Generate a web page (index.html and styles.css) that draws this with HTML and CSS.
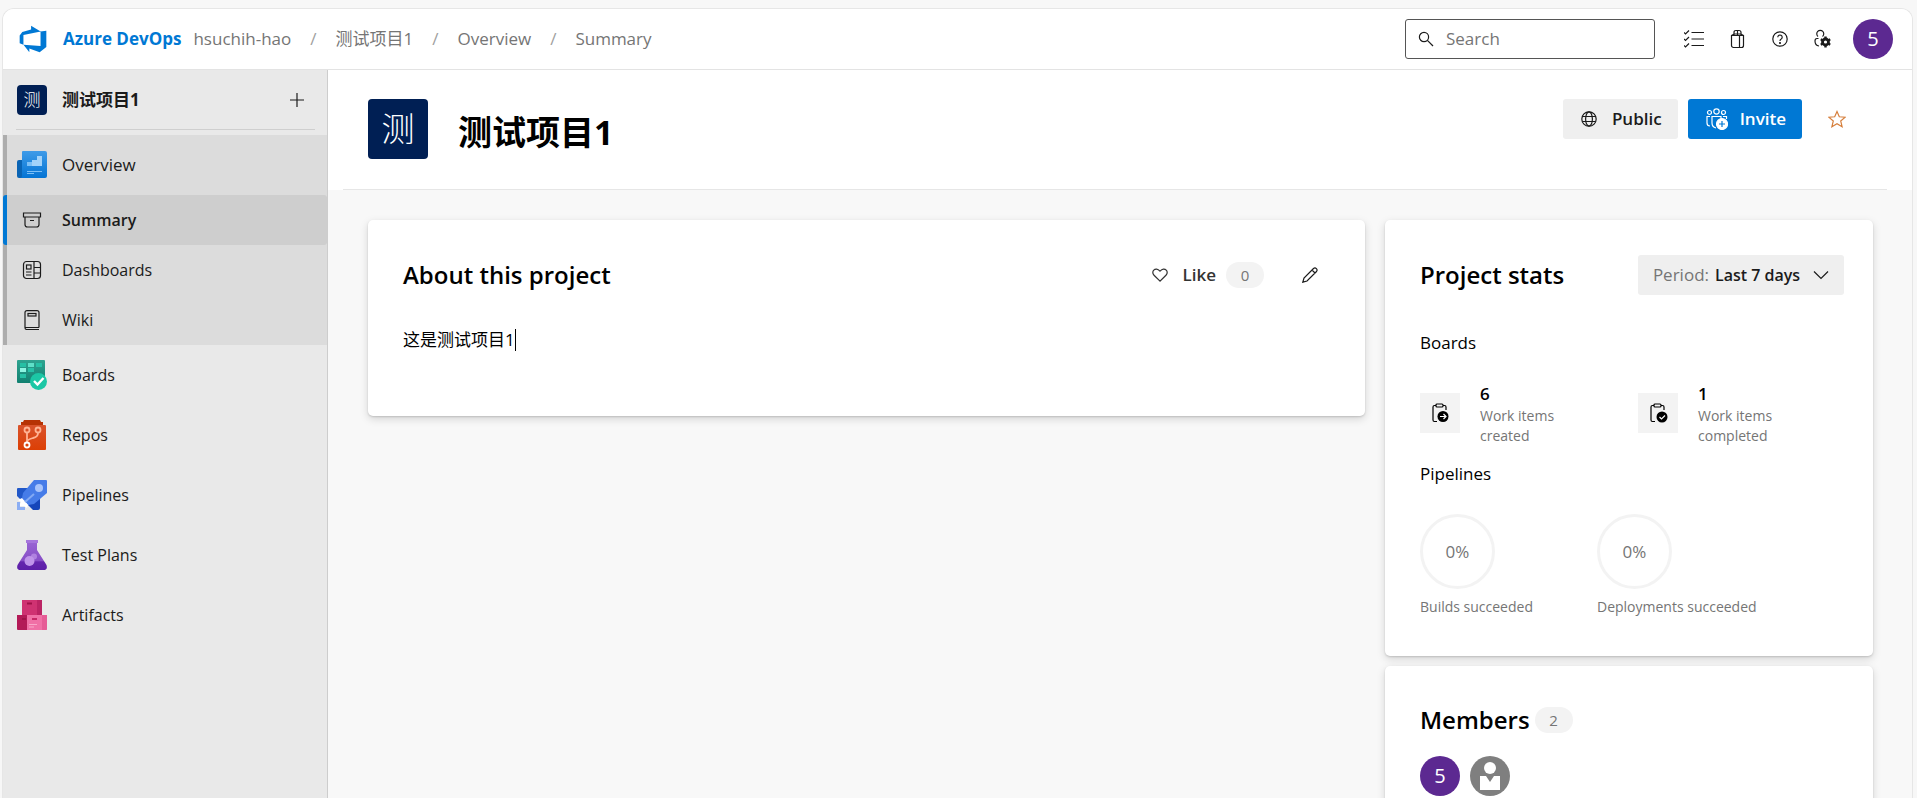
FILE: index.html
```html
<!DOCTYPE html>
<html lang="en">
<head>
<meta charset="utf-8">
<title>测试项目1 - Overview</title>
<link rel="stylesheet" href="styles.css">
</head>
<body>
<div class="app">
  <header class="topbar">
    <a class="brand" href="#">
      <svg class="brand-logo" viewBox="0 0 18 18" aria-hidden="true"><path fill="#0078d4" d="M17 4v9.74l-4 3.28-6.2-2.26V17l-3.51-4.59 10.23.8V4.44zm-3.41.49L7.85 1v2.29L2.58 4.84 1 6.87v4.61l2.26 1V6.57z"/></svg>
      <span>Azure DevOps</span>
    </a>
    <nav class="crumbs" aria-label="Breadcrumb">
      <a href="#">hsuchih-hao</a><span class="sep">/</span>
      <a href="#">测试项目1</a><span class="sep">/</span>
      <a href="#">Overview</a><span class="sep">/</span>
      <a href="#">Summary</a>
    </nav>
    <div class="search">
      <svg class="icon16" viewBox="0 0 16 16" aria-hidden="true"><circle cx="6" cy="6" r="4.6"/><path d="M9.4 9.4 15 15"/></svg>
      <input type="search" placeholder="Search" aria-label="Search">
    </div>
    <div class="tools">
      <button class="tool" aria-label="Work items"><svg class="icon20" viewBox="0 0 20 20"><path d="M7.500 3.500H20M7.500 10H20M7.500 16.500H20M0 3.500l1.500 1.500L5 1.500M0 10l1.500 1.500L5 8M0 16.500l1.500 1.500L5 14.500"/></svg></button>
      <button class="tool" aria-label="Marketplace"><svg class="icon20" viewBox="0 0 20 20"><path d="M4.500 6.500h12v10a2 2 0 0 1-2 2h-8a2 2 0 0 1-2-2zM4.500 6.500 7 5h7l2.500 1.500M7 6.500V3.500Q7 1.500 9 1.500h3Q14 1.500 14 3.500V6.500M10.500 1.500v5M12.500 6.500v12"/></svg></button>
      <button class="tool" aria-label="Help"><svg class="icon16" viewBox="0 0 16 16"><circle cx="8" cy="8" r="7.200"/><path d="M5.800 6.200a2.200 2.200 0 1 1 3.400 1.900Q8 8.800 8 10"/><circle cx="8" cy="12" r=".5"/></svg></button>
      <button class="tool" aria-label="User settings"><svg class="icon20" viewBox="0 0 20 20"><path d="M5 7.500a3.500 3.500 0 1 1 4.500 0M5.500 9.500H4Q2 9.500 2 12q0 4.500 4 5"/><circle cx="12.500" cy="13" r="3" stroke-width="2.800"/><path stroke-width="2.400" d="M12.500 7.500v2.500M12.500 16v2.500M7.800 10.300l2 1.200M15.200 14.500l2 1.200M7.800 15.700l2-1.200M15.200 11.500l2-1.200"/></svg></button>
      <button class="avatar" aria-label="Account">5</button>
    </div>
  </header>

  <div class="body">
    <aside class="sidebar">
      <div class="project">
        <span class="tile">测</span>
        <span class="project-name">测试项目1</span>
        <button class="add" aria-label="New"><svg class="icon16" viewBox="0 0 16 16"><path d="M8 1v14M1 8h14"/></svg></button>
      </div>
      <nav aria-label="Project">
        <div class="group">
          <a class="item hub current" href="#">
            <svg class="hub-icon" viewBox="0 0 30 30"><defs><linearGradient id="ov" x2="0" y2="1"><stop stop-color="#3f9be8"/><stop offset="1" stop-color="#0474d4"/></linearGradient></defs><path fill="#0a64b4" d="M2 10h5v18H2a2 2 0 0 1-2-2V12q0-2 2-2z"/><path fill="url(#ov)" d="M6 1h22a2 2 0 0 1 2 2v23a2 2 0 0 1-2 2H3q2 0 2-2V2q0-1 1-1z"/><path fill="#7cc0f7" d="M10 12h5v-2h5V6h5v10H10z"/><path fill="#b4dcfb" d="M15 10h5v6h-5zM20 6h5v10h-5z" opacity=".7"/><path stroke="#7cc0f7" d="M10 21.500h15M10 23.500h7"/></svg>
            Overview</a>
          <a class="item active" href="#"><svg class="icon20" viewBox="0 0 20 20"><path d="M1.500 3h17v4h-17zM3 7v7.500Q3 17 5.500 17h9q2.500 0 2.500-2.500V7M8 10.500h4"/></svg>Summary</a>
          <a class="item" href="#"><svg class="icon20" viewBox="0 0 20 20"><rect x="1.500" y="1.500" width="17" height="17" rx="3"/><path d="M12 1.500v17M12 7.500h6.500M12 13h6.500M4 12h5.500M4 15h5.500"/><rect x="4.500" y="5" width="4.500" height="4"/></svg>Dashboards</a>
          <a class="item" href="#"><svg class="icon20" viewBox="0 0 20 20"><path d="M17 17.500V2.500Q17 .700 15 .700H5Q3 .700 3 2.500v15.200q0 1.800 2 1.800h12M3 17.500h14"/><rect x="6" y="3.500" width="8" height="2.500"/></svg>Wiki</a>
        </div>
        <a class="item hub" href="#">
          <svg class="hub-icon" viewBox="0 0 30 30"><defs><linearGradient id="bo" x2="0" y2="1"><stop stop-color="#2fa390"/><stop offset="1" stop-color="#128171"/></linearGradient></defs><rect width="28" height="23" rx="1" fill="url(#bo)"/><path fill="#26c0a5" d="M3 3h6v4H3zM19 3h6v4h-6zM11 8h6v4h-6zM3 14h6v4H3z"/><path fill="#5ee0c8" d="M11 3h6v4h-6z"/><path fill="#8df5e2" d="M3 8h6v4H3z"/><circle cx="21.500" cy="21.500" r="8.500" fill="#1cc7a5"/><path d="m17 21 3.500 3.500 6-6.500" fill="none" stroke="#fff" stroke-width="2.400"/></svg>
          Boards</a>
        <a class="item hub" href="#">
          <svg class="hub-icon" viewBox="0 0 30 30"><defs><linearGradient id="re" x2="0" y2="1"><stop stop-color="#d9532c"/><stop offset="1" stop-color="#dc3f04"/></linearGradient></defs><path fill="#b63204" d="M7 0h16l1 2h2v4H4V2h2z"/><rect x="1" y="5" width="28" height="25" rx="1" fill="url(#re)"/><g fill="none" stroke="#ffb394" stroke-width="1.800"><path d="M10 13v9M21 13q0 4-5 5-6 1.500-6 4"/><circle cx="10" cy="10" r="2.500"/><circle cx="21" cy="10" r="2.500"/><circle cx="10" cy="25" r="2.500" stroke="#fff"/></g></svg>
          Repos</a>
        <a class="item hub" href="#">
          <svg class="hub-icon" viewBox="0 0 30 30"><path fill="#2258c8" d="M1 8h12L6 22 0 16V9q0-1 1-1z"/><path fill="#1546ba" d="m11 25 12-9v12q0 2-2 2h-5z"/><path fill="#467ce8" d="M17 0h12q1 0 1 1v12L17 24 11 25 5 18l1-5z"/><path fill="#fff" d="m5 18 6 7-1 3-3-2-5 0 2-4-3-2z"/><path d="m8 22 9-8" stroke="#83aaf4" stroke-width="2"/><circle cx="22" cy="8" r="4" fill="#a8c4fb"/><path fill="#8caef3" d="M0 22h3v5h5v3H0z"/></svg>
          Pipelines</a>
        <a class="item hub" href="#">
          <svg class="hub-icon" viewBox="0 0 30 30"><defs><linearGradient id="te" x2="0" y2="1"><stop stop-color="#9a66d4"/><stop offset=".7" stop-color="#864dc6"/><stop offset=".71" stop-color="#6425ae"/><stop offset="1" stop-color="#5d1fa8"/></linearGradient></defs><path fill="url(#te)" d="M10 1h10v9l9.500 15q1.500 5-3 5h-23q-4.500 0-3-5L10 10z"/><path fill="#a676dc" d="M9 0h12v3H9z"/><circle cx="12.500" cy="21" r="5" fill="#bf94ea"/><circle cx="17" cy="16.500" r="3" fill="#bf94ea" opacity=".7"/></svg>
          Test Plans</a>
        <a class="item hub" href="#">
          <svg class="hub-icon" viewBox="0 0 30 30"><path fill="#cf3272" d="M5 0h20v15H5z"/><path fill="#bb2464" d="M20 0h5v15h-5z"/><path fill="#b31a57" d="M0 15h10v15H1q-1 0-1-1z"/><path fill="#f070a6" d="M10 15h20v14q0 1-1 1H10z"/><path fill="#e65c96" d="M25 15h5v14q0 1-1 1h-4z"/><path fill="#a01148" d="M10 2.500h5v2h-5zM5 18h4v2H5z"/><path fill="#c72767" d="M15 18h5v2h-5z"/><path stroke="#f9a6c9" d="M12 24.500h8M12 27h5"/></svg>
          Artifacts</a>
      </nav>
    </aside>

    <main class="main">
      <div class="page-head">
        <span class="tile tile-large">测</span>
        <h1>测试项目1</h1>
        <div class="head-actions">
          <button class="btn"><svg class="icon16" viewBox="0 0 16 16" aria-hidden="true"><circle cx="8" cy="8" r="7.200"/><ellipse cx="8" cy="8" rx="3.400" ry="7.200"/><path d="M1.500 5.500h13M1.500 10.500h13"/></svg>Public</button>
          <button class="btn primary"><svg class="icon22" viewBox="0 0 22 22" aria-hidden="true"><circle cx="3.500" cy="4.500" r="2"/><circle cx="10.500" cy="3.500" r="2.700"/><circle cx="17.500" cy="4.500" r="2"/><path d="M4 8.500H1V15q0 3 3 3M17 8.500h3.500V11M10 20q-4-1-4-5V8.500h9V11"/><circle cx="16" cy="16" r="5.500" fill="#fff"/><path stroke="#0078d4" d="M16 13v6M13 16h6"/></svg>Invite</button>
          <button class="star" aria-label="Favorite"><svg class="icon18" viewBox="0 0 18 18"><path d="m9 1.500 2.300 5.300 5.900.400-4.500 3.800 1.400 5.700L9 13.700l-5.100 3 1.400-5.700L.800 7.200l5.900-.400z"/></svg></button>
        </div>
      </div>

      <div class="columns">
        <section class="card about">
          <div class="card-head">
            <h2>About this project</h2>
            <button class="like"><svg class="icon16" viewBox="0 0 16 16" aria-hidden="true"><path d="M8 14.200 1.800 8Q0 5.500 1.500 3.400 4.500.500 8 4.200q3.500-3.700 6.500-.800Q16 5.500 14.200 8z"/></svg>Like<span class="pill">0</span></button>
            <button class="edit" aria-label="Edit"><svg class="icon16" viewBox="0 0 16 16"><path d="M.800 15.200 2 11 11.500 1.500q1.500-1.200 2.900.1 1.300 1.400.1 2.900L5 14zM10 3l3 3"/></svg></button>
          </div>
          <p class="description">这是测试项目1<span class="caret"></span></p>
        </section>

        <div class="side">
          <section class="card stats">
            <div class="card-head">
              <h2>Project stats</h2>
              <div class="period">
                <label for="period">Period:</label>
                <select id="period"><option>Last 7 days</option></select>
                <svg class="icon16" viewBox="0 0 16 16" aria-hidden="true"><path d="m1 4.500 7 7 7-7"/></svg>
              </div>
            </div>
            <h3>Boards</h3>
            <div class="work">
              <div class="stat">
                <span class="stat-icon"><svg class="icon20" viewBox="0 0 20 20" aria-hidden="true"><path d="M7 18.500H4.500Q3 18.500 3 17V4q0-1.500 1.500-1.500H6M13 2.500h1.500Q16 2.500 16 4v3"/><rect x="6" y="1" width="7" height="3" rx="1"/><circle cx="13" cy="13.500" r="5.500" fill="#000" stroke="none"/><path stroke="#fff" d="M10 13.500h6M13.500 11l2.500 2.500-2.500 2.500"/></svg></span>
                <div><strong>6</strong><span>Work items created</span></div>
              </div>
              <div class="stat">
                <span class="stat-icon"><svg class="icon20" viewBox="0 0 20 20" aria-hidden="true"><path d="M7 18.500H4.500Q3 18.500 3 17V4q0-1.500 1.500-1.500H6M13 2.500h1.500Q16 2.500 16 4v3"/><rect x="6" y="1" width="7" height="3" rx="1"/><circle cx="14" cy="14" r="5.500" fill="#000" stroke="none"/><path stroke="#fff" d="m11.500 14 2 2 3.500-3.500"/></svg></span>
                <div><strong>1</strong><span>Work items completed</span></div>
              </div>
            </div>
            <h3>Pipelines</h3>
            <div class="rates">
              <div class="rate"><span class="ring">0%</span><span>Builds succeeded</span></div>
              <div class="rate"><span class="ring">0%</span><span>Deployments succeeded</span></div>
            </div>
          </section>

          <section class="card members">
            <div class="members-head"><h2>Members</h2><span class="pill">2</span></div>
            <div class="people">
              <span class="avatar">5</span>
              <svg class="person" viewBox="0 0 40 40" role="img" aria-label="Member"><circle cx="20" cy="20" r="20" fill="#7f7f7f"/><circle cx="20" cy="12" r="6" fill="#fff"/><path fill="#fff" d="M10 20h6l4 6 4-6h6v14H10z"/></svg>
            </div>
          </section>
        </div>
      </div>
    </main>
  </div>
</div>
</body>
</html>
```
FILE: styles.css
```css
* { box-sizing: border-box; }

body {
  margin: 0;
  padding: 8px 4px 0 2px;
  height: 100vh;
  overflow: hidden;
  background: #f7f7f7;
  color: #1b1b1b;
  font: 17px/24px "Open Sans", "Noto Sans CJK SC", sans-serif;
}

h1, h2, h3, p { margin: 0; }
a { color: inherit; text-decoration: none; }
button, input, select { font: inherit; color: inherit; border: 0; background: none; padding: 0; margin: 0; }
button { cursor: pointer; }

svg { flex: none; display: block; }
.icon16, .icon18, .icon20, .icon22 { fill: none; stroke: currentColor; stroke-width: 1.2; }
.icon16 { width: 16px; height: 16px; }
.icon18 { width: 18px; height: 18px; }
.icon20 { width: 20px; height: 20px; }
.icon22 { width: 22px; height: 22px; }

.app {
  display: flex;
  flex-direction: column;
  height: 100%;
  border: 1px solid #e6e6e6;
  border-bottom: 0;
  border-radius: 12px 12px 0 0;
  overflow: hidden;
}

/* Top bar */
.topbar {
  flex: none;
  display: flex;
  align-items: center;
  height: 61px;
  padding: 0 19px 0 15px;
  background: #fff;
  border-bottom: 1px solid #e3e3e3;
}
.brand { display: flex; align-items: center; gap: 15px; color: #0078d4; font-weight: 700; }
.brand-logo { width: 30px; height: 30px; }
.crumbs { display: flex; gap: 19px; margin-left: 12px; color: #757575; }
.sep { color: #a0a0a0; }
.search {
  display: flex;
  align-items: center;
  gap: 12px;
  width: 250px;
  height: 40px;
  margin-left: auto;
  padding: 0 12px;
  border: 1px solid #555;
  border-radius: 3px;
}
.search input { flex: 1; min-width: 0; outline: 0; }
.search input::placeholder { color: #757575; opacity: 1; }
.tools { display: flex; align-items: center; margin-left: 17px; }
.tool { display: grid; place-items: center; width: 43px; height: 40px; }
.avatar {
  display: grid;
  place-items: center;
  width: 40px;
  height: 40px;
  border-radius: 50%;
  background: #5c2991;
  color: #fff;
  font-size: 20px;
}
.tools .avatar { margin-left: 9px; }

/* Sidebar */
.body { flex: 1; display: flex; min-height: 0; }
.sidebar { flex: none; width: 325px; background: #e9e9e9; border-right: 1px solid #cdcdcd; }
.project {
  display: flex;
  align-items: center;
  gap: 15px;
  height: 60px;
  margin: 0 12px 5px 13px;
  padding-right: 10px;
  border-bottom: 1px solid #cfcfcf;
}
.tile {
  display: grid;
  place-items: center;
  width: 30px;
  height: 30px;
  border-radius: 4px;
  background: #001f54;
  color: #fff;
  font-weight: 300;
}
.project .tile { margin-left: 1px; }
.project-name { flex: 1; font-weight: 700; }
.group { background: #dcdcdc; border-left: 4px solid #adadad; }
.item { display: flex; align-items: center; gap: 20px; height: 50px; padding-left: 19px; font-size: 16px; }
.group .item { padding-left: 15px; }
.item.hub { height: 60px; gap: 15px; padding-left: 14px; }
.group .item.hub { padding-left: 10px; }
.hub-icon { width: 30px; height: 30px; }
.item.current { font-size: 17px; font-weight: 500; }
.item.active {
  margin-left: -4px;
  background: #cecece;
  border-left: 4px solid #0078d4;
  border-radius: 3px;
  font-weight: 600;
}

/* Page header */
.main { flex: 1; min-width: 0; background: #f8f8f8; }
.page-head {
  display: flex;
  align-items: flex-start;
  height: 120px;
  padding: 29px 50px 0 40px;
  background: linear-gradient(#e6e6e6, #e6e6e6) 15px 100% / calc(100% - 40px) 1px no-repeat #fff;
}
.tile-large { width: 60px; height: 60px; font-size: 33px; }
h1 { margin-left: 30px; font-size: 34px; line-height: 66px; color: #000; }
.head-actions { display: flex; gap: 10px; margin-left: auto; }
.btn {
  display: flex;
  align-items: center;
  gap: 15px;
  height: 40px;
  padding: 0 16px 0 18px;
  border-radius: 3px;
  background: #efefef;
  font-weight: 600;
}
.btn.primary { gap: 12px; background: #0078d4; color: #fff; }
.star { display: grid; place-items: center; width: 50px; height: 40px; color: #d67f3c; }

/* Cards */
.columns { display: grid; grid-template-columns: minmax(0, 997fr) minmax(0, 488fr); gap: 20px; align-items: start; padding: 30px 39px 0 40px; }
.side { display: grid; gap: 10px; }
.card { background: #fff; border-radius: 5px; box-shadow: 0 3px 8px rgba(0, 0, 0, .15), 0 1px 2px rgba(0, 0, 0, .14); }
.card-head { display: flex; align-items: center; height: 40px; }
h2 { font-size: 24px; font-weight: 600; line-height: 38px; color: #000; }
h3 { font-size: 17px; font-weight: 400; line-height: 24px; color: #000; }
.about { min-height: 196px; padding: 35px 35px 0; }
.like { display: flex; align-items: center; gap: 14px; margin-left: auto; font-weight: 600; color: #333; }
.pill {
  min-width: 38px;
  padding: 0 12px;
  border-radius: 13px;
  background: #f3f3f3;
  color: #757575;
  font-size: 15px;
  font-weight: 400;
  line-height: 26px;
  text-align: center;
}
.like .pill { margin-left: -4px; }
.edit { display: grid; place-items: center; width: 40px; height: 40px; margin: 0 0 0 26px; }
.description { display: flex; align-items: center; margin-top: 33px; color: #000; }
.caret { width: 1px; height: 22px; background: #000; }

.stats { padding: 35px 29px 39px 35px; }
.period {
  display: flex;
  align-items: center;
  gap: 6px;
  height: 40px;
  margin-left: auto;
  padding: 0 15px;
  border-radius: 3px;
  background: #efefef;
}
.period label { color: #757575; }
.period select { appearance: none; font-weight: 600; font-size: 16px; }
.period svg { margin-left: 6px; }
.stats h3 { margin-top: 36px; }
.work { display: grid; grid-template-columns: 218fr 206fr; margin-top: 27px; }
.stat { display: flex; gap: 20px; height: 68px; }
.stat-icon { display: grid; place-items: center; flex: none; width: 40px; height: 40px; margin-top: 11px; background: #f3f3f3; color: #000; }
.stat strong { display: block; font-weight: 600; line-height: 24px; color: #000; }
.stat div span { display: block; width: 90px; color: #757575; font-size: 14px; line-height: 20px; }
.stats .work + h3 { margin-top: 12px; }
.rates { display: flex; gap: 64px; margin-top: 28px; }
.rate { display: grid; gap: 8px; color: #757575; font-size: 14px; line-height: 20px; }
.ring { display: grid; place-items: center; width: 75px; height: 75px; border: 3px solid #f3f3f3; border-radius: 50%; font-size: 17px; }

.members { min-height: 200px; padding: 35px; }
.members-head { display: flex; align-items: center; gap: 5px; height: 38px; }
.people { display: flex; gap: 10px; margin-top: 17px; }
.person { width: 40px; height: 40px; }
```
